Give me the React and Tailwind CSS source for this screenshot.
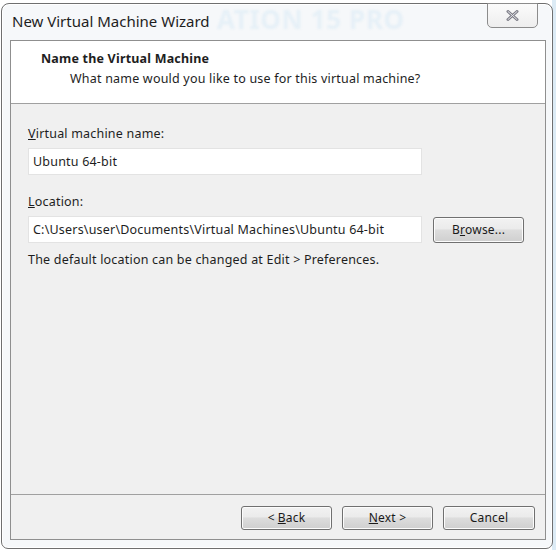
export default function App() {
  const font = { fontFamily: '"Noto Sans", "Open Sans", sans-serif' };
  const btn =
    "h-[24px] rounded-[3px] border border-[#707070] bg-[linear-gradient(#f2f2f2,#ebebeb_45%,#dddddd_50%,#cfcfcf)] text-[12px] text-[#1a1a1a] flex items-center justify-center shadow-[inset_0_0_0_1px_#fcfcfc]";
  return (
    <div className="w-[556px] h-[550px] bg-[linear-gradient(90deg,#ffffff_0,#ffffff_552px,#dcebf5_552px)] overflow-hidden" style={font}>
      <div className="relative ml-[1px] mt-[3px] w-[552px] h-[546px] rounded-t-[8px] rounded-b-[7px] border border-[#6f6f6f] bg-[#f6f8fa] shadow-[inset_0_0_0_1px_#ffffff] flex flex-col">
        {/* watermark */}
        <div className="absolute left-[215px] top-[2px] text-[26px] font-bold text-[#e6f0f7] tracking-wide select-none leading-none blur-[1px]">
          ATION 15 PRO
        </div>
        {/* close button */}
        <div className="absolute right-[14px] top-[-1px] w-[51px] h-[25px] rounded-b-[5px] border border-[#8c8c8c] bg-[linear-gradient(#fbfbfb,#eeeeee)] flex items-center justify-center">
          <svg width="13" height="11" viewBox="0 0 13 11">
            <path d="M2 1.5 L11 9.5 M11 1.5 L2 9.5" stroke="#7d7d86" strokeWidth="3" strokeLinecap="round" />
            <path d="M2 1.5 L11 9.5 M11 1.5 L2 9.5" stroke="#e4e4ea" strokeWidth="1" strokeLinecap="round" />
          </svg>
        </div>
        {/* title bar */}
        <div className="relative h-[36px] pl-[10px] pt-[10px] text-[15px] text-[#1e1e1e] leading-none">
          New Virtual Machine Wizard
        </div>
        {/* client */}
        <div className="ml-[8px] w-[536px] h-[500px] border border-[#8f8f8f] bg-[#f0f0f0] flex flex-col text-[12.5px] tracking-[0.2px] text-[#1e1e1e]">
          <div className="h-[63px] bg-white border-b border-[#a0a0a0] pt-[10px] leading-[16px]">
            <div className="pl-[30px] font-bold">Name the Virtual Machine</div>
            <div className="pl-[59px] mt-[4px]">What name would you like to use for this virtual machine?</div>
          </div>
          <div className="flex-1 pl-[17px] pt-[22px] leading-[16px]">
            <div><span className="underline">V</span>irtual machine name:</div>
            <div className="mt-[6px] w-[394px] h-[27px] bg-white border border-[#e3e3e3] flex items-center pl-[4px]">
              Ubuntu 64-bit
            </div>
            <div className="mt-[19px]"><span className="underline">L</span>ocation:</div>
            <div className="mt-[6px] flex items-center">
              <div className="w-[394px] h-[27px] bg-white border border-[#e3e3e3] flex items-center pl-[4px]">
                C:\Users\user\Documents\Virtual Machines\Ubuntu 64-bit
              </div>
              <div className={btn + " ml-[11px] w-[91px] h-[26px]"}>
                B<span className="underline">r</span>owse...
              </div>
            </div>
            <div className="mt-[9px]">The default location can be changed at Edit &gt; Preferences.</div>
          </div>
          <div className="h-[45px] border-t border-[#a0a0a0] flex items-start justify-end pt-[11px] pr-[10px] gap-[10px]">
            <div className={btn + " w-[91px]"}>
              &lt; <span className="underline ml-[3px]">B</span>ack
            </div>
            <div className={btn + " w-[91px]"}>
              <span className="underline">N</span>ext &gt;
            </div>
            <div className={btn + " w-[92px]"}>Cancel</div>
          </div>
        </div>
      </div>
    </div>
  );
}
